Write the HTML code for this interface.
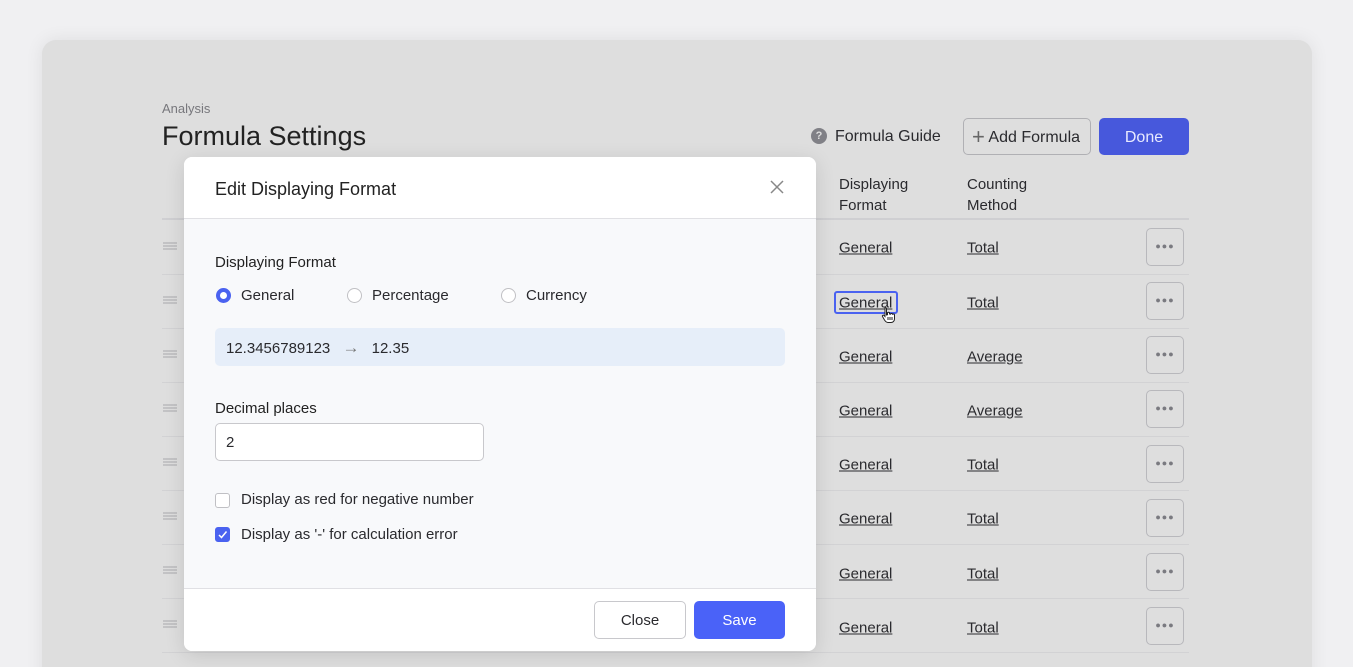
<!DOCTYPE html>
<html><head><style>
*{margin:0;padding:0;box-sizing:border-box}
html,body{width:1353px;height:667px;overflow:hidden}
body{background:#f0f0f2;font-family:"Liberation Sans",sans-serif;position:relative;color:#2a2a2e}
.card{position:absolute;left:42px;top:40px;width:1270px;height:660px;background:#dedede;border-radius:14px;box-shadow:0 0 18px rgba(0,0,0,.08)}
.a{position:absolute}
.sep{position:absolute;left:162px;width:1027px;height:1px;background:#d2d2d4}
.lnk{position:absolute;font-size:15px;text-decoration:underline;color:#2a2a2e;transform:translateY(-50%)}
.more{position:absolute;left:1146px;width:38px;height:38px;border:1px solid #b8b8bc;border-radius:5px;transform:translateY(-50%);text-align:center;font-size:9px;line-height:34px;color:#7a7a80;letter-spacing:1px}
.hand{position:absolute;left:163px;width:14px;height:7px;border-top:1px solid #a8a8ac;border-bottom:1px solid #a8a8ac;transform:translateY(-50%)}
.hand:after{content:"";position:absolute;left:0;right:0;top:2px;height:1px;background:#a8a8ac}
.dlg{position:absolute;left:184px;top:157px;width:632px;height:494px;background:#f8f9fb;border-radius:8px;overflow:hidden;box-shadow:0 4px 20px rgba(0,0,0,.12)}
.radio{position:absolute;width:15px;height:15px;border-radius:50%;border:1px solid #c0c0c4;background:#fff}
.cb{position:absolute;width:15px;height:15px;border-radius:3px;border:1px solid #c0c0c4;background:#fff}
</style></head><body>
<div class="card"></div>
<div class="a" style="left:162px;top:101px;font-size:13px;color:#77777c">Analysis</div>
<div class="a" style="left:162px;top:121px;font-size:27px;color:#222">Formula Settings</div>
<div class="a" style="left:811px;top:128px;width:16px;height:16px;border-radius:50%;background:#808086;color:#ddd;font-size:11px;font-weight:bold;text-align:center;line-height:16px">?</div>
<div class="a" style="left:835px;top:128px;font-size:16px">Formula Guide</div>
<div class="a" style="left:963px;top:118px;width:128px;height:37px;border:1px solid #b0b0b4;border-radius:5px;font-size:16px;line-height:35px;padding-left:8px"><span style="font-size:22px;color:#666;vertical-align:-2px">+</span> Add Formula</div>
<div class="a" style="left:1099px;top:118px;width:90px;height:37px;background:#4758dc;border-radius:5px;color:#e8eaff;font-size:16px;text-align:center;line-height:39px">Done</div>
<div class="a" style="left:839px;top:174px;font-size:15px;line-height:21px">Displaying<br>Format</div>
<div class="a" style="left:967px;top:174px;font-size:15px;line-height:21px">Counting<br>Method</div>
<div class="sep" style="top:218px;height:2px;background:#cfcfd2"></div>
<div class="sep" style="top:274px"></div><div class="sep" style="top:328px"></div><div class="sep" style="top:382px"></div><div class="sep" style="top:436px"></div><div class="sep" style="top:490px"></div><div class="sep" style="top:544px"></div><div class="sep" style="top:598px"></div><div class="sep" style="top:652px"></div>

<div class="hand" style="top:246px"></div><div class="lnk" style="left:839px;top:248px">General</div><div class="lnk" style="left:967px;top:248px">Total</div><div class="more" style="top:247px">●●●</div>
<div class="hand" style="top:300px"></div><div class="lnk" style="left:839px;top:303px">General</div><div class="a" style="left:834px;top:291px;width:64px;height:23px;border:2px solid #4a62f0;border-radius:3px"></div><div class="lnk" style="left:967px;top:303px">Total</div><div class="more" style="top:301px">●●●</div>
<svg class="a" style="left:881px;top:306px" width="14" height="18"><path d="M4 1.5c1 0 1.5.5 1.5 1.5v6l1-.3V7c0-1 2-1 2 0v1l1 .2c0-1 2-1 2 0v.5c0-1 2-1 2 .3V13c0 2-1.5 3.5-3.5 3.5H7c-1.5 0-2.5-1-3.5-2.5L1.5 10.5c-.5-1 .8-1.8 1.6-1L4 10.5V3c0-1 0-1.5 0-1.5z" fill="#fff" stroke="#222" stroke-width="1"/><path d="M7 11v3M9 11v3M11 11v3" stroke="#222" stroke-width="1"/></svg>
<div class="hand" style="top:354px"></div><div class="lnk" style="left:839px;top:357px">General</div><div class="lnk" style="left:967px;top:357px">Average</div><div class="more" style="top:355px">●●●</div>
<div class="hand" style="top:408px"></div><div class="lnk" style="left:839px;top:411px">General</div><div class="lnk" style="left:967px;top:411px">Average</div><div class="more" style="top:409px">●●●</div>
<div class="hand" style="top:462px"></div><div class="lnk" style="left:839px;top:465px">General</div><div class="lnk" style="left:967px;top:465px">Total</div><div class="more" style="top:464px">●●●</div>
<div class="hand" style="top:516px"></div><div class="lnk" style="left:839px;top:519px">General</div><div class="lnk" style="left:967px;top:519px">Total</div><div class="more" style="top:518px">●●●</div>
<div class="hand" style="top:570px"></div><div class="lnk" style="left:839px;top:574px">General</div><div class="lnk" style="left:967px;top:574px">Total</div><div class="more" style="top:572px">●●●</div>
<div class="hand" style="top:624px"></div><div class="lnk" style="left:839px;top:628px">General</div><div class="lnk" style="left:967px;top:628px">Total</div><div class="more" style="top:626px">●●●</div>

<div class="dlg">
 <div class="a" style="left:0;top:0;width:632px;height:62px;background:#fff;border-bottom:1px solid #e0e0e4"></div>
 <div class="a" style="left:31px;top:22px;font-size:18px;color:#222">Edit Displaying Format</div>
 <svg class="a" style="left:586px;top:23px" width="14" height="14"><path d="M1 1L13 13M13 1L1 13" stroke="#888" stroke-width="1.5"/></svg>
 <div class="a" style="left:31px;top:97px;font-size:15px;color:#222">Displaying Format</div>
 <div class="radio" style="left:32px;top:131px;border:4px solid #4a62f0"></div>
 <div class="a" style="left:57px;top:130px;font-size:15px">General</div>
 <div class="radio" style="left:163px;top:131px"></div>
 <div class="a" style="left:188px;top:130px;font-size:15px">Percentage</div>
 <div class="radio" style="left:317px;top:131px"></div>
 <div class="a" style="left:342px;top:130px;font-size:15px">Currency</div>
 <div class="a" style="left:31px;top:171px;width:570px;height:38px;background:#e6eef9;border-radius:5px;font-size:15px;line-height:40px;padding-left:11px">12.3456789123 <span style="color:#777;margin:0 8px;font-size:17px">→</span> 12.35</div>
 <div class="a" style="left:31px;top:243px;font-size:15px;color:#222">Decimal places</div>
 <div class="a" style="left:31px;top:266px;width:269px;height:38px;background:#fff;border:1px solid #c8c8cc;border-radius:5px;font-size:15px;line-height:38px;padding-left:10px">2</div>
 <div class="cb" style="left:31px;top:336px"></div>
 <div class="a" style="left:57px;top:334px;font-size:15px">Display as red for negative number</div>
 <div class="cb" style="left:31px;top:370px;background:#4a62f0;border-color:#4a62f0"><svg width="13" height="13" style="position:absolute;left:0;top:0"><path d="M3 7L5.5 9.5L10.5 3.5" stroke="#fff" stroke-width="1.5" fill="none"/></svg></div>
 <div class="a" style="left:57px;top:369px;font-size:15px">Display as '-' for calculation error</div>
 <div class="a" style="left:0;top:431px;width:632px;height:63px;background:#fff;border-top:1px solid #e0e0e4"></div>
 <div class="a" style="left:410px;top:444px;width:92px;height:38px;border:1px solid #c8c8cc;border-radius:5px;background:#fff;text-align:center;line-height:38px;font-size:15px">Close</div>
 <div class="a" style="left:510px;top:444px;width:91px;height:38px;background:#4a62f8;border-radius:5px;color:#fff;text-align:center;line-height:40px;font-size:15px">Save</div>
</div>
</body></html>
